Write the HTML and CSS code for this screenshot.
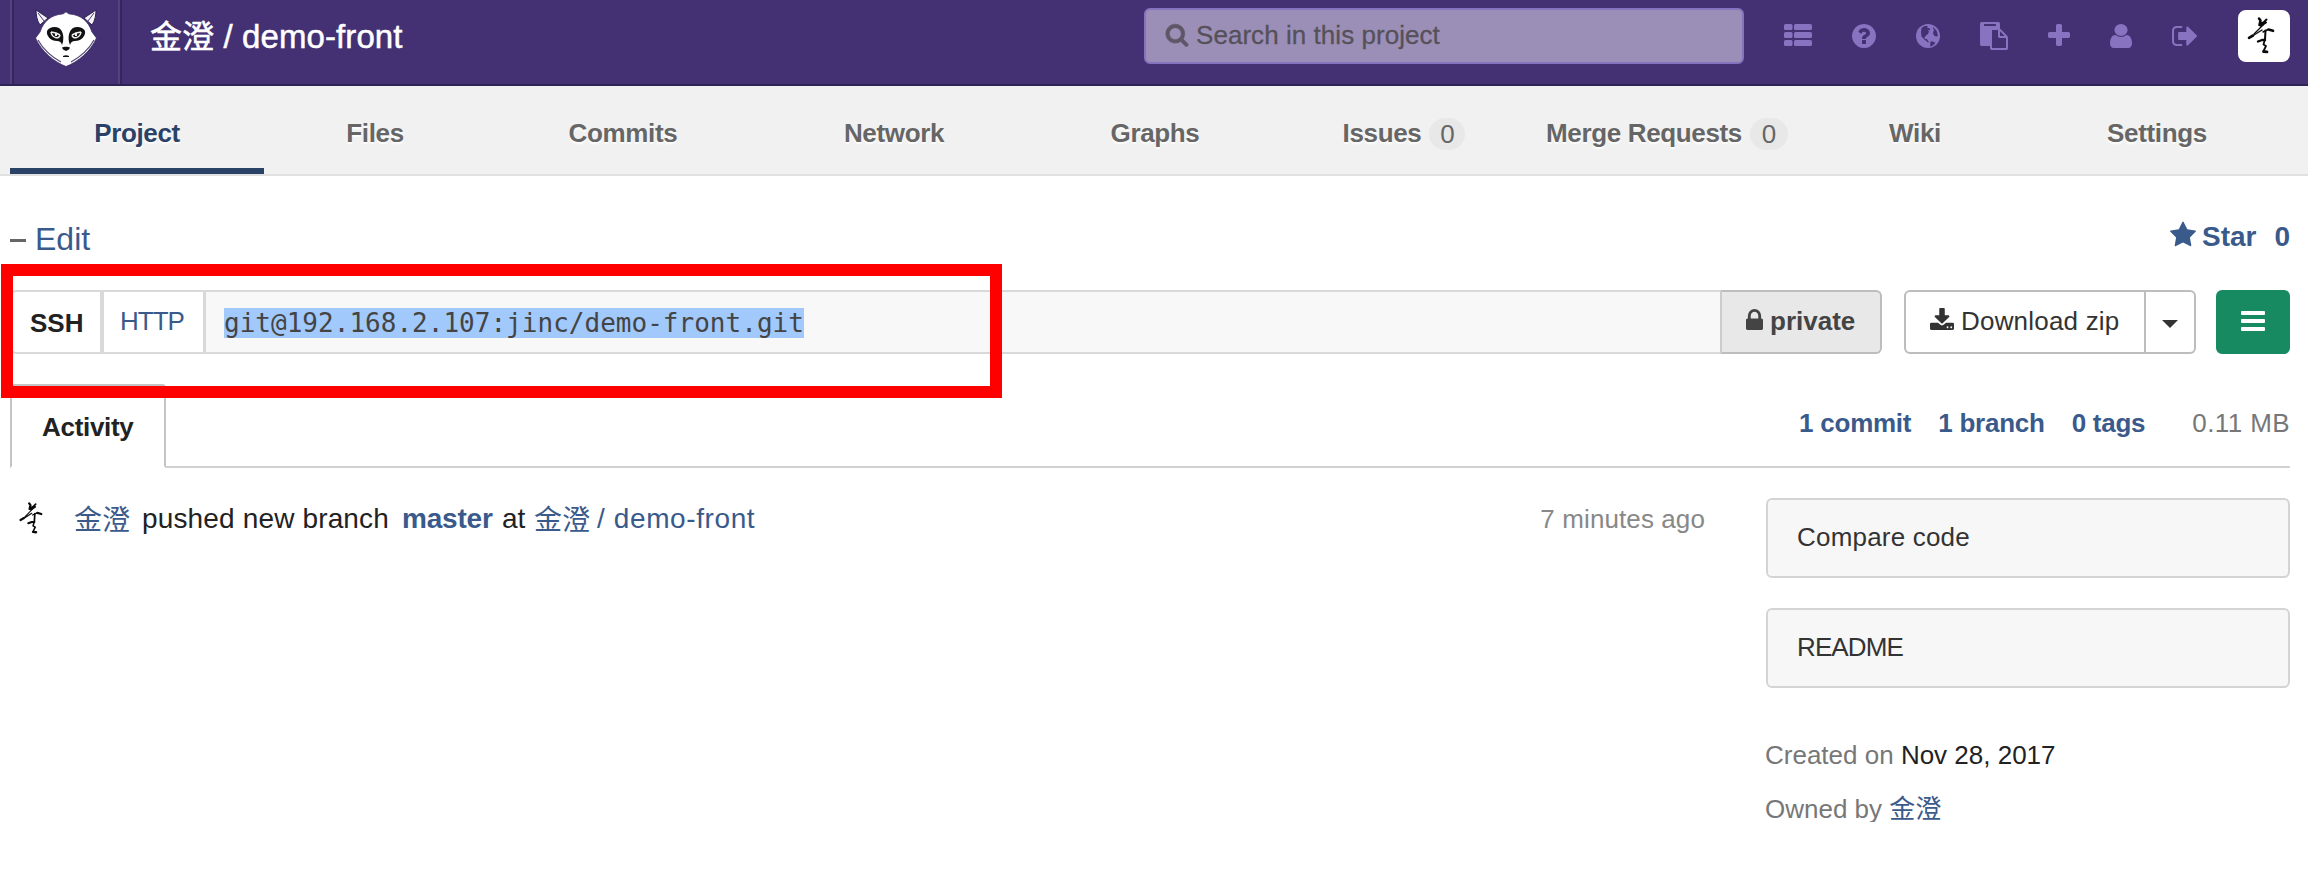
FILE: index.html
```html
<!DOCTYPE html>
<html lang="en">
<head>
<meta charset="utf-8">
<title>金澄 / demo-front</title>
<link rel="stylesheet" href="styles.css">
</head>
<body>
<svg class="defs" width="0" height="0">
  <symbol id="ink" viewBox="0 0 52 52">
    <g fill="none" stroke="#0a0a0a" stroke-linecap="round" stroke-linejoin="round">
      <path stroke-width="2.600" d="M21 8.500l1.500 2-1 4.500 3.500-2"/>
      <path stroke-width="2" d="M24.500 13.500l4-4M28 12.500l-5 3.500"/>
      <path stroke-width="1.200" d="M25 15l-5 5-4 4"/>
      <path stroke-width="2.600" d="M15 25.500l-4 2.300"/>
      <path stroke-width="1.400" d="M16 25l8-5M25 22l5-2.500"/>
      <path stroke-width="2.600" d="M30.500 19.500l4.500 1.300"/>
      <path stroke-width="2" d="M27.500 20.500l-.5 9"/>
      <path stroke-width="2.400" d="M20 31.500l4-1.500 3 0"/>
      <path stroke-width="1.800" d="M26.500 31l-1 3.500 2.500 1.500-2 4"/>
      <path stroke-width="2.800" d="M25.500 41.500l3.500 .3"/>
    </g>
  </symbol>
</svg>
<header class="topbar">
  <a class="logo">
    <svg width="62" height="58" viewBox="0 0 62 58">
      <path fill="#f5f3f8" stroke="#2c2050" d="M1 1l12 8-8 7C2 12 1 6 1 1zM61 1l-12 8 8 7c3-4 4-10 4-15z"/>
      <path fill="none" stroke="#4a3c70" d="M3 4l6 8M59 4l-6 8"/>
      <path fill="#fff" stroke="#392960" stroke-width=".8" d="M31 3c-1 0-2 2-4 2C17 6 9 11 5 23L.5 29C6 42 19 53 31 57.500 43 53 56 42 61.500 29L57 23C53 11 45 6 35 5c-2 0-3-2-4-2z"/>
      <path fill="none" stroke="#55486f" stroke-width="1.200" d="M3 31c5 9 14 17 23 22M59 31c-5 9-14 17-23 22"/>
      <path fill="#111" d="M12 22c2-4 8-5 12-3 4 3 5 8 4 14l-1 3c-1-3-2-4-5-4-6 0-11-5-10-10zM50 22c-2-4-8-5-12-3-4 3-5 8-4 14l1 3c1-3 2-4 5-4 6 0 11-5 10-10z"/>
      <path fill="none" stroke="#eee" stroke-width="1.500" d="M16 23l5 1 4 2M16 23c1 6 8 8 9 3M46 23l-5 1-4 2M46 23c-1 6-8 8-9 3"/>
      <path fill="#eee" d="M20 24h2v3h-2zM40 24h2v3h-2z"/>
      <path fill="#111" d="M27 38.500c2-1 6-1 8 0l-1 2-3 1.500-3-1.500zM28 47c2-1 4-1 6 0v1h-6z"/>
    </svg>
  </a>
  <h1 class="title"><span class="cjk">金澄</span> / demo-front</h1>
  <div class="search">
    <svg width="24" height="25" viewBox="0 0 1792 1792"><path d="M1216 832q0-185-131.500-316.500t-316.500-131.500-316.500 131.500-131.500 316.500 131.500 316.500 316.500 131.500 316.500-131.500 131.500-316.500zm512 832q0 52-38 90t-90 38q-54 0-90-38l-343-342q-179 124-399 124-143 0-273.500-55.500t-225-150-150-225-55.500-273.500 55.500-273.500 150-225 225-150 273.500-55.500 273.500 55.500 225 150 150 225 55.500 273.500q0 220-124 399l343 343q37 37 37 90z"/></svg>
    <span>Search in this project</span>
  </div>
  <nav class="tools">
    <svg class="t-list" width="28" height="22" viewBox="0 0 28 22"><rect width="8.500" height="6" rx="1.500"/><rect x="10" width="18" height="6" rx="1.500"/><rect y="8" width="8.500" height="6" rx="1.500"/><rect x="10" y="8" width="18" height="6" rx="1.500"/><rect y="16" width="8.500" height="6" rx="1.500"/><rect x="10" y="16" width="18" height="6" rx="1.500"/></svg>
    <svg class="t-help" width="24" height="24" viewBox="128 128 1536 1536"><path d="M1024 1376v-192q0-14-9-23t-23-9h-192q-14 0-23 9t-9 23v192q0 14 9 23t23 9h192q14 0 23-9t9-23zm256-672q0-88-55.500-163t-138.500-116-170-41q-243 0-371 213-15 24 8 42l132 100q7 6 19 6 16 0 25-12 53-68 86-92 34-24 86-24 48 0 85.500 26t37.500 59q0 38-20 61t-68 45q-63 28-115.500 86.500t-52.500 125.500v36q0 14 9 23t23 9h192q14 0 23-9t9-23q0-19 21.500-49.500t54.500-49.500q32-18 49-28.500t46-35 44.500-48 28-60.500 12.500-81zm384 192q0 209-103 385.500t-279.500 279.500-385.500 103-385.500-103-279.500-279.500-103-385.500 103-385.500 279.500-279.500 385.500-103 385.500 103 279.500 279.500 103 385.500z"/></svg>
    <svg class="t-globe" width="24" height="24" viewBox="0 0 24 24"><circle cx="12" cy="12" r="12"/><path class="land" d="M5.500 4l3-2 3.500 0-1 1.700 2 .2 1.500 1.500-1 1-2-1 1.500 2-1 2.500-2 1.500-1.500 2 .5 1.500 2 0 1 2 1 1-1 .5L8.500 15.500l-3-3L5 8zM17 3l3.500 3.500 1.500 5-1 1-2.500-.5-1.500-2.500.5-2.500 1-1-1.500-1zM14 18l2-.8 3.500 1.500-3 3-2.500.8.5-2.500z"/></svg>
    <svg class="t-paste" width="28" height="28" viewBox="0 0 1792 1792"><path d="M768 1664h896v-640h-416q-40 0-68-28t-28-68v-416h-384v1152zm256-1440v-64q0-13-9.500-22.500t-22.500-9.500h-704q-13 0-22.500 9.500t-9.500 22.500v64q0 13 9.500 22.500t22.500 9.500h704q13 0 22.500-9.500t9.500-22.500zm256 672h299l-299-299v299zm512 128v672q0 40-28 68t-68 28h-960q-40 0-68-28t-28-68v-160h-544q-40 0-68-28t-28-68v-1344q0-40 28-68t68-28h1088q40 0 68 28t28 68v328q21 13 36 28l408 408q28 28 48 76t20 88z"/></svg>
    <svg class="t-plus" width="22" height="22" viewBox="192 128 1408 1408"><path d="M1600 736v192q0 40-28 68t-68 28h-416v416q0 40-28 68t-68 28h-192q-40 0-68-28t-28-68v-416h-416q-40 0-68-28t-28-68v-192q0-40 28-68t68-28h416v-416q0-40 28-68t68-28h192q40 0 68 28t28 68v416h416q40 0 68 28t28 68z"/></svg>
    <svg class="t-user" width="22" height="24" viewBox="256 128 1280 1536" preserveAspectRatio="none"><path d="M1536 1399q0 109-62.500 187t-150.500 78h-854q-88 0-150.500-78t-62.500-187q0-85 8.500-160.500t31.500-152 58.500-131 94-89 134.500-34.500q131 128 313 128t313-128q76 0 134.500 34.500t94 89 58.500 131 31.500 152 8.500 160.500zm-256-887q0 159-112.500 271.500t-271.500 112.500-271.500-112.500-112.500-271.500 112.500-271.500 271.500-112.500 271.500 112.500 112.500 271.500z"/></svg>
    <svg class="t-out" width="25" height="20" viewBox="64 256 1568 1280" preserveAspectRatio="none"><path d="M704 1440q0 4 1 20t.5 26.500-3 23.500-10 19.500-20.500 6.500h-320q-119 0-203.500-84.500t-84.500-203.500v-704q0-119 84.500-203.500t203.500-84.500h320q13 0 22.500 9.500t9.500 22.500q0 4 1 20t.5 26.500-3 23.500-10 19.500-20.500 6.500h-320q-66 0-113 47t-47 113v704q0 66 47 113t113 47h312l11.500 1 11.500 3 8 5.500 7 9 2 13.500zm928-544q0 26-19 45l-544 544q-19 19-45 19t-45-19-19-45v-288h-448q-26 0-45-19t-19-45v-384q0-26 19-45t45-19h448v-288q0-26 19-45t45-19 45 19l544 544q19 19 19 45z"/></svg>
  </nav>
  <div class="avatar"><svg width="52" height="52"><use href="#ink"/></svg></div>
</header>
<nav class="tabs">
  <a class="active">Project</a><a>Files</a><a>Commits</a><a>Network</a><a>Graphs</a>
  <a>Issues<span class="count">0</span></a><a>Merge Requests<span class="count wide">0</span></a><a>Wiki</a><a>Settings</a>
</nav>
<main class="page">
  <div class="head">
    <div class="edit"><i class="dash"></i><a>Edit</a></div>
    <div class="star">
      <svg width="28" height="28" viewBox="0 0 1792 1792"><path d="M1728 647q0 22-26 48l-363 354 86 500q1 7 1 20 0 21-10.500 35.500t-30.500 14.500q-19 0-40-12l-449-236-449 236q-22 12-40 12-21 0-31.500-14.500t-10.500-35.500q0-6 2-20l86-500-364-354q-25-27-25-48 0-37 56-46l502-73 225-455q19-41 49-41t49 41l225 455 502 73q56 9 56 46z"/></svg>
      <span class="star-text">Star</span><span>0</span>
    </div>
  </div>
  <div class="clone">
    <div class="ssh">SSH</div>
    <div class="http">HTTP</div>
    <div class="url"><span>git@192.168.2.107:jinc/demo-front.git</span></div>
    <div class="private"><svg width="17" height="21" viewBox="320 128 1152 1408" preserveAspectRatio="none"><path d="M640 768h512v-192q0-106-75-181t-181-75-181 75-75 181v192zm832 96v576q0 40-28 68t-68 28h-960q-40 0-68-28t-28-68v-576q0-40 28-68t68-28h32v-192q0-184 132-316t316-132 316 132 132 316v192h32q40 0 68 28t28 68z"/></svg>private</div>
    <div class="download"><svg width="24" height="22" viewBox="64 0 1664 1536" preserveAspectRatio="none"><path d="M1344 1344q0-26-19-45t-45-19-45 19-19 45 19 45 45 19 45-19 19-45zm256 0q0-26-19-45t-45-19-45 19-19 45 19 45 45 19 45-19 19-45zm128-224v320q0 40-28 68t-68 28h-1472q-40 0-68-28t-28-68v-320q0-40 28-68t68-28h465l135 136q58 56 136 56t136-56l136-136h464q40 0 68 28t28 68zm-325-569q17 41-14 70l-448 448q-18 19-45 19t-45-19l-448-448q-31-29-14-70 17-39 59-39h256v-448q0-26 19-45t45-19h256q26 0 45 19t19 45v448h256q42 0 59 39z"/></svg>Download zip</div>
    <div class="drop"><svg width="16" height="8" viewBox="0 0 16 8"><path d="M0 0h16L8 8z"/></svg></div>
    <div class="menu"><svg width="24" height="20" viewBox="0 0 24 20"><rect width="24" height="4" rx="1"/><rect y="8" width="24" height="4" rx="1"/><rect y="16" width="24" height="4" rx="1"/></svg></div>
  </div>
  <div class="activity-bar">
    <div class="tab">Activity</div>
    <div class="stats"><b>1 commit</b><b>1 branch</b><b>0 tags</b><span>0.11 MB</span></div>
  </div>
  <div class="columns">
    <section class="event">
      <svg class="mini" width="45" height="45"><use href="#ink"/></svg>
      <a class="who cjk">金澄</a>
      <span class="what">pushed new branch</span>
      <a class="branch">master</a>
      <span class="at">at</span>
      <a class="repo"><span class="cjk">金澄</span> <span class="slash">/</span> <span class="name">demo-front</span></a>
      <time>7 minutes ago</time>
    </section>
    <aside class="side">
      <a class="box">Compare code</a>
      <a class="box readme">README</a>
      <p class="first">Created on <b>Nov 28, 2017</b></p>
      <p class="owner">Owned by <a class="cjk">金澄</a></p>
    </aside>
  </div>
</main>
<div class="marker"></div>
</body>
</html>
```
FILE: styles.css
```css
* { box-sizing: border-box; }
body {
  margin: 0;
  background: #fff;
  color: #222;
  font: 26px/30px "Liberation Sans", "Noto Sans CJK SC", sans-serif;
  white-space: nowrap;
  overflow: hidden;
}
svg { display: block; flex: none; }
.defs { position: absolute; }
.cjk { font-family: "Noto Sans CJK SC", sans-serif; }

.topbar {
  display: flex;
  align-items: flex-start;
  height: 86px;
  padding-left: 10px;
  background: #443174;
  border-bottom: 2px solid #2f2353;
}
.logo {
  width: 112px;
  height: 84px;
  padding: 9px 0 0 23px;
  border-left: 2px solid #54427f;
  border-right: 2px solid #33265a;
  box-shadow: inset 2px 0 #33265a, inset -2px 0 #54427f;
}
.title {
  width: 994px;
  margin: 0;
  padding: 15px 0 0 28px;
  font-size: 33px;
  font-weight: 400;
  line-height: 38px;
  letter-spacing: .1px;
  color: #fff;
  -webkit-text-stroke: .5px #fff;
}
.title .cjk { font-size: 32px; }
.search {
  display: flex;
  width: 600px;
  height: 56px;
  margin: 8px 0 0 28px;
  padding: 10px 0 0 20px;
  background: #9b8fb8;
  border: 2px solid #8672be;
  border-radius: 6px;
  color: #565159;
  letter-spacing: .05px;
  -webkit-text-stroke: .3px #565159;
}
.search svg { margin: 2px 7px 0 -1px; fill: #5f5767; stroke: #5f5767; stroke-width: 50; }
.tools { display: flex; margin-left: 40px; fill: #8873c0; }
.tools svg { margin-top: 24px; }
.tools .land { fill: #443174; }
.t-help { margin-left: 40px; }
.t-globe { margin-left: 40px; }
.tools .t-paste { margin: 22px 0 0 40px; }
.t-plus { margin-left: 40px; }
.t-user { margin-left: 40px; }
.tools .t-out { margin: 26px 0 0 40px; }
.avatar {
  width: 52px;
  height: 52px;
  margin: 10px 0 0 41px;
  background: #fff;
  border-radius: 8px;
}

.tabs {
  display: grid;
  grid-template-columns: 254px 222px 274px 268px 254px 244px 282px 214px 270px;
  height: 90px;
  padding-left: 10px;
  background: #f1f1f1;
  border-bottom: 2px solid #e1e1e1;
  font-weight: 700;
  letter-spacing: -.35px;
  color: #666;
  text-shadow: 0 2px 2px #fff;
}
.tabs a {
  display: flex;
  justify-content: center;
  height: 88px;
  padding-top: 32px;
}
.tabs .active { color: #2a4265; border-bottom: 6px solid #2a4265; }
.count {
  width: 36px;
  height: 32px;
  margin: 0 0 0 8px;
  border-radius: 16px;
  background: #e8e8e8;
  font-weight: 400;
  letter-spacing: 0;
  line-height: 32px;
  text-align: center;
  text-shadow: none;
}
.count.wide { width: 38px; }

.page { padding: 0 18px 0 10px; }
a, .http, .star, .stats { color: #395a8b; }
.tabs a:not(.active) { color: #666; }
.head { display: flex; justify-content: space-between; height: 114px; }
.edit { display: flex; padding-top: 44px; font-size: 32px; line-height: 38px; }
.dash { width: 16px; height: 3px; margin: 19px 9px 0 0; background: #666; }
.star { display: flex; padding-top: 45px; font-size: 28px; font-weight: 700; line-height: 32px; }
.star svg { margin: 0 5px 0 0; fill: currentColor; }
.star-text { margin-right: 18px; }

.clone { display: flex; height: 64px; }
.clone > div { height: 64px; border: 2px solid #d9d9d9; }
.clone > .ssh {
  width: 92px;
  padding: 14px 0 0 18px;
  border-radius: 6px 0 0 6px;
  font-weight: 700;
  line-height: 34px;
}
.clone > .http { width: 103px; padding: 14px 0 0 16px; letter-spacing: -1px; }
.clone > .url {
  flex: 1;
  padding: 16px 0 0 18px;
  margin-left: -1px;
  background: #f8f8f8;
  font: 26px/30px "DejaVu Sans Mono", monospace;
  letter-spacing: .02px;
  color: #444;
  border-right: 0;
}
.url span { display: block; width: fit-content; height: 30px; background: #a2c9fb; }
.clone > .private {
  display: flex;
  width: 162px;
  padding: 14px 0 0 24px;
  background: #e8e8e8;
  border-color: #bdbdbd;
  border-left-color: #ccc;
  border-radius: 0 6px 6px 0;
  font-weight: 700;
  color: #444;
}
.private svg { margin: 3px 7px 0 0; fill: #444; }
.clone > .download {
  display: flex;
  width: 242px;
  margin-left: 22px;
  padding: 14px 0 0 24px;
  border-color: #bdbdbd;
  border-radius: 6px 0 0 6px;
  letter-spacing: .2px;
  color: #333;
}
.download svg { margin: 2px 7px 0 0; fill: #333; }
.clone > .drop {
  width: 50px;
  padding: 28px 0 0 16px;
  border-color: #bdbdbd;
  border-left: 0;
  border-radius: 0 6px 6px 0;
  fill: #333;
}
.clone > .menu {
  width: 74px;
  margin-left: 20px;
  padding: 21px 0 0 25px;
  border: 0;
  border-radius: 6px;
  background: #178a62;
  fill: #fff;
}

.activity-bar {
  display: flex;
  justify-content: space-between;
  height: 84px;
  margin-top: 30px;
  border-bottom: 2px solid #d2d2d2;
}
.tab {
  width: 156px;
  height: 84px;
  padding: 26px 0 0 30px;
  border: 2px solid #c4c4c4;
  border-bottom-color: #fff;
  border-radius: 4px 4px 0 0;
  font-weight: 700;
  letter-spacing: -.3px;
}
.stats { display: flex; padding-top: 24px; }
.stats b { margin-right: 27px; letter-spacing: -.25px; }
.stats span { margin-left: 20px; letter-spacing: .4px; color: #777; }

.columns { display: flex; }
.event {
  display: flex;
  width: 1695px;
  padding-top: 35px;
  font-size: 28px;
  line-height: 32px;
}
.mini { margin: -7px 0 0 1px; }
.who { width: 56px; margin: -1px 0 0 18px; font-size: 28px; }
.what { width: 247px; margin-left: 12px; letter-spacing: .15px; }
.branch { width: 91px; margin-left: 13px; font-weight: 700; letter-spacing: -.2px; }
.at { width: 23px; margin-left: 9px; }
.repo { display: flex; margin-left: 9px; }
.repo .cjk { margin-top: -1px; font-size: 28px; }
.slash { margin: 0 9px 0 7px; }
.name { letter-spacing: .6px; }
.event time { margin-left: auto; font-size: 26px; letter-spacing: .1px; color: #888; }

.side { flex: 1; margin-left: 61px; padding-top: 30px; }
.box {
  display: block;
  height: 80px;
  margin-bottom: 30px;
  padding: 22px 0 0 29px;
  border: 2px solid #d4d4d4;
  border-radius: 6px;
  background: #f7f7f7;
  color: #333;
  letter-spacing: .2px;
}
.readme { letter-spacing: -.9px; }
.side p { height: 30px; margin: 24px 0 0 -1px; color: #777; }
.side .first { margin-top: 52px; }
.side .owner { margin-top: 22px; }
.side p b { font-weight: 400; color: #222; }

/* Highlight frame drawn over the clone address */
.marker {
  position: absolute;
  left: 1px;
  top: 264px;
  width: 1001px;
  height: 134px;
  border: 12px solid #f00;
}
```
